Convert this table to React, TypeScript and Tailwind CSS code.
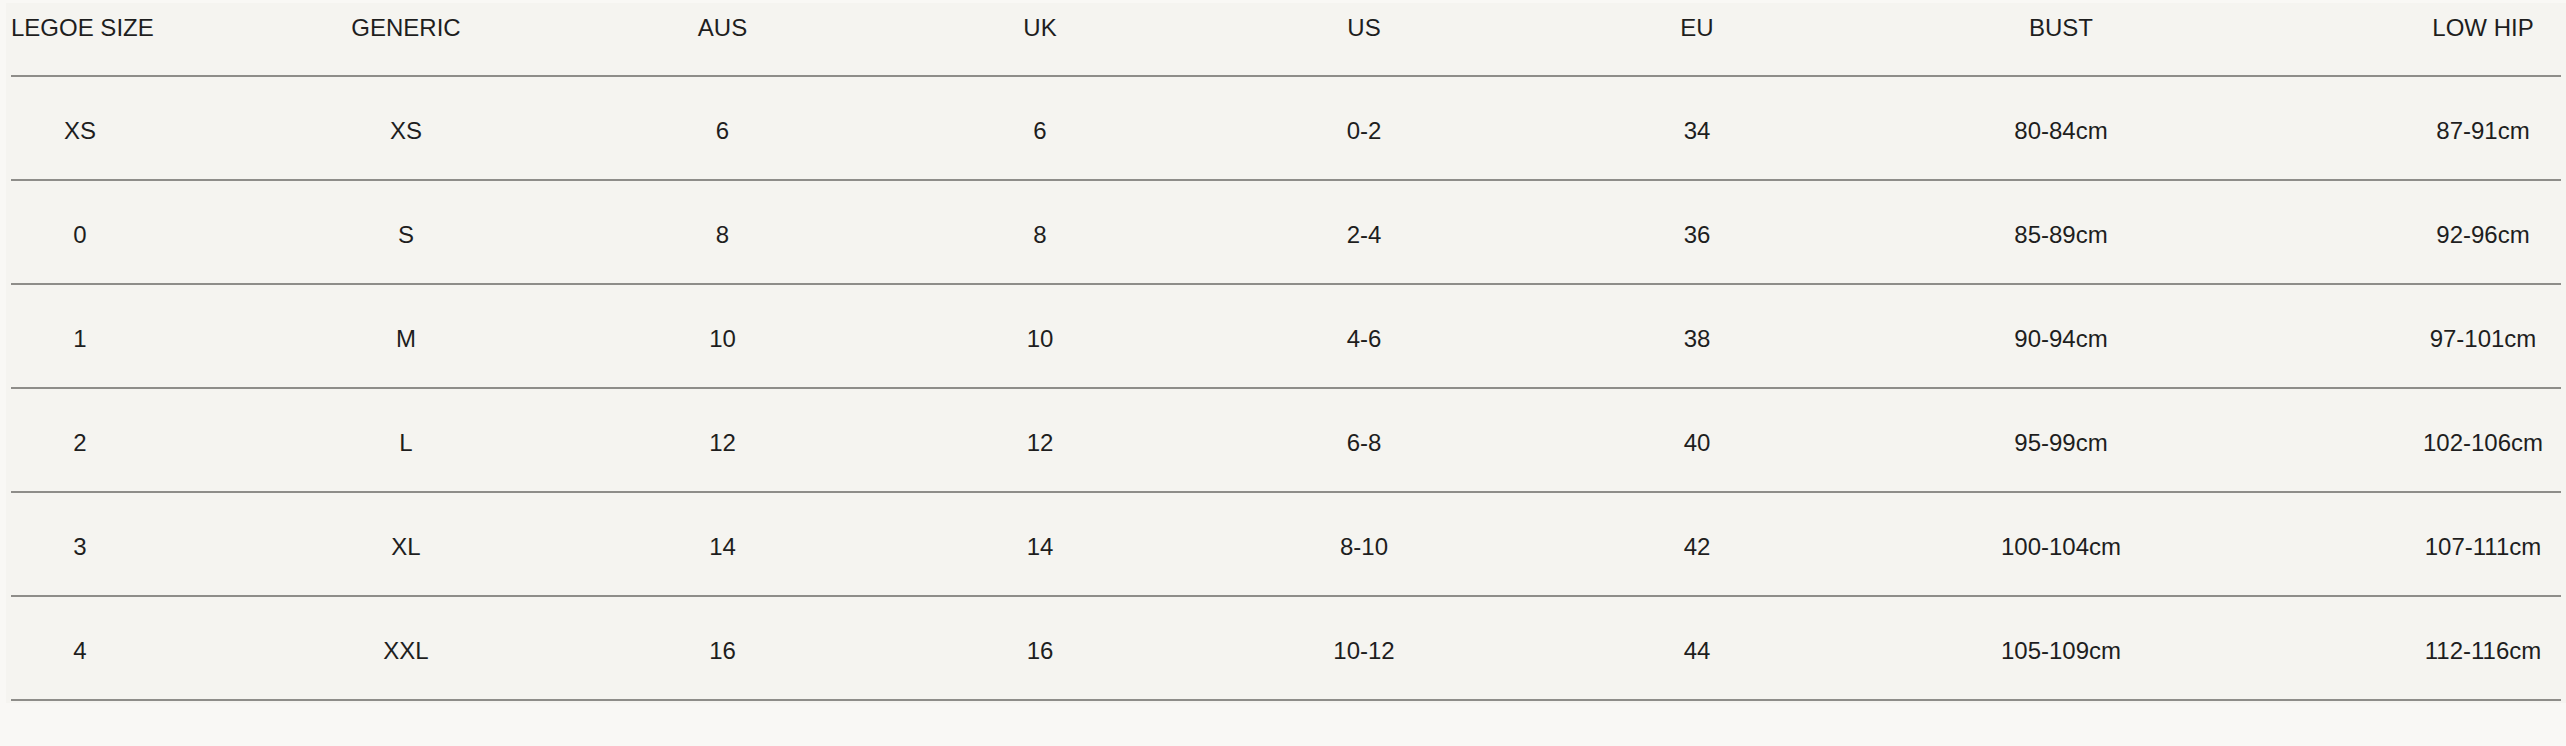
import React from 'react';

const headers = ['LEGOE SIZE', 'GENERIC', 'AUS', 'UK', 'US', 'EU', 'BUST', 'LOW HIP'];

const rows: string[][] = [
  ['XS', 'XS', '6', '6', '0-2', '34', '80-84cm', '87-91cm'],
  ['0', 'S', '8', '8', '2-4', '36', '85-89cm', '92-96cm'],
  ['1', 'M', '10', '10', '4-6', '38', '90-94cm', '97-101cm'],
  ['2', 'L', '12', '12', '6-8', '40', '95-99cm', '102-106cm'],
  ['3', 'XL', '14', '14', '8-10', '42', '100-104cm', '107-111cm'],
  ['4', 'XXL', '16', '16', '10-12', '44', '105-109cm', '112-116cm'],
];

// column widths picked so each cell's centre sits where the reference has it
const gridCols = 'grid grid-cols-[138px_514px_119px_516px_132px_534px_194px_1fr]';

const Cell: React.FC<{ index: number; children: React.ReactNode }> = ({ index, children }) => {
  if (index === 7) {
    return (
      <div className="flex justify-end">
        <div className="w-[156px] text-center whitespace-nowrap">{children}</div>
      </div>
    );
  }
  return <div className="text-center whitespace-nowrap">{children}</div>;
};

const SizeChart: React.FC = () => {
  return (
    <div className="bg-[#f5f4f0] px-[5px] pb-[2px]">
      <div className={`${gridCols} pt-[11px] pb-[33px] border-b-2 border-[#8e8d89]`}>
        {headers.map((h, i) => (
          <Cell key={h} index={i}>
            {h}
          </Cell>
        ))}
      </div>
      {rows.map((row, r) => (
        <div key={r} className={`${gridCols} pt-[40px] pb-[34px] border-b-2 border-[#8e8d89]`}>
          {row.map((v, i) => (
            <Cell key={i} index={i}>
              {v}
            </Cell>
          ))}
        </div>
      ))}
    </div>
  );
};

export default function App() {
  return (
    <div
      className="min-h-screen bg-[#f9f8f5] pt-[3px] pl-[6px] text-[24px] leading-[28px] text-[#1e1e1e]"
      style={{ fontFamily: '"Liberation Sans", Arial, sans-serif' }}
    >
      <SizeChart />
    </div>
  );
}
